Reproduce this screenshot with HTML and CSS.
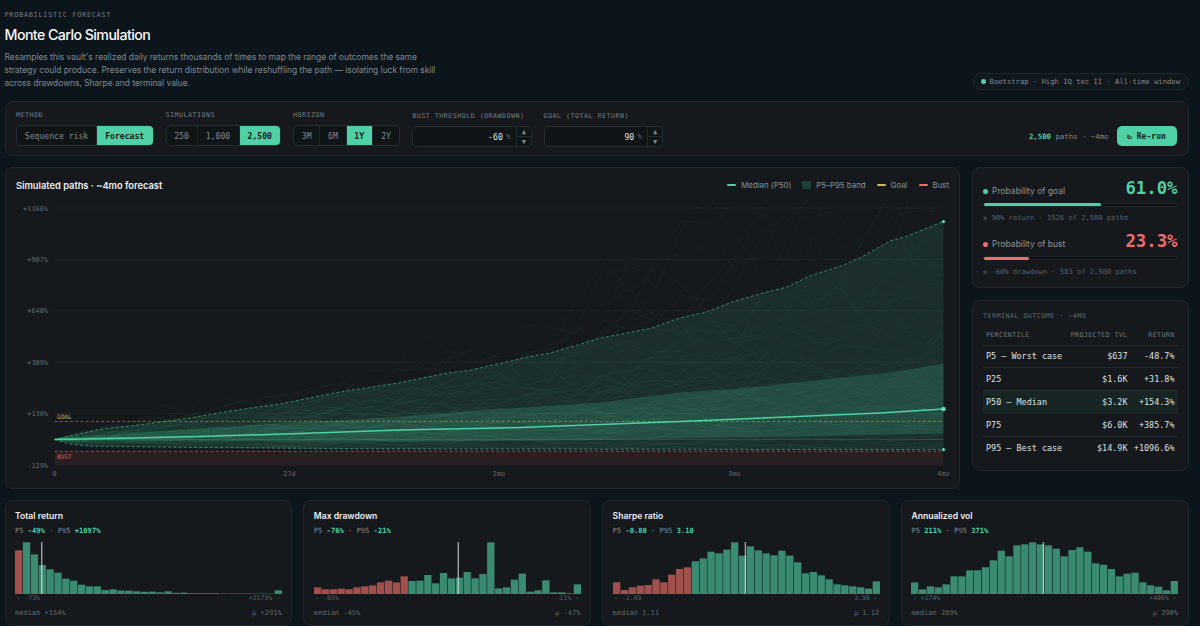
FILE: index.html
```html
<!DOCTYPE html>
<html lang="en">
<head>
<meta charset="utf-8">
<title>Monte Carlo Simulation</title>
<link rel="stylesheet" href="styles.css">
</head>
<body>
<main class="page">
  <header class="head">
    <div>
      <div class="eyebrow">PROBABILISTIC FORECAST</div>
      <h1 class="title">Monte Carlo Simulation</h1>
      <p class="desc">Resamples this vault's realized daily returns thousands of times to map the range of outcomes the same<br>strategy could produce. Preserves the return distribution while reshuffling the path — isolating luck from skill<br>across drawdowns, Sharpe and terminal value.</p>
    </div>
    <div class="pill"><i class="dot"></i>Bootstrap · High IQ tec II · All-time window</div>
  </header>

  <section class="card controls">
    <div class="field"><span class="label">METHOD</span>
      <div class="seg seg-method"><span>Sequence risk</span><span class="on">Forecast</span></div></div>
    <div class="field"><span class="label">SIMULATIONS</span>
      <div class="seg seg-sims"><span>250</span><span>1,000</span><span class="on">2,500</span></div></div>
    <div class="field"><span class="label">HORIZON</span>
      <div class="seg seg-hor"><span>3M</span><span>6M</span><span class="on">1Y</span><span>2Y</span></div></div>
    <div class="field low"><span class="label">BUST THRESHOLD (DRAWDOWN)</span>
      <div class="num"><span class="val">-60</span><span class="unit">%</span><div class="spin"><b>▲</b><b>▼</b></div></div></div>
    <div class="field low"><span class="label">GOAL (TOTAL RETURN)</span>
      <div class="num"><span class="val">90</span><span class="unit">%</span><div class="spin"><b>▲</b><b>▼</b></div></div></div>
    <div class="run"><span class="info"><b>2,500</b> paths · ~4mo</span><button class="btn"><span class="re">↻</span> Re-run</button></div>
  </section>

  <div class="mid">
    <section class="card chart">
      <div class="chart-head">
        <h2>Simulated paths · ~4mo forecast</h2>
        <div class="legend">
          <span><i class="line green"></i>Median (P50)</span>
          <span><i class="box"></i>P5–P95 band</span>
          <span><i class="line gold"></i>Goal</span>
          <span><i class="line red"></i>Bust</span>
        </div>
      </div>
      <svg id="plot" width="934" height="286" viewBox="16 196 934 286"></svg>
    </section>
    <div class="side">
      <section class="card probs">
        <div class="prob goal">
          <div class="prob-row"><span><i class="dot"></i>Probability of goal</span><strong>61.0%</strong></div>
          <div class="track"><div class="fill" style="width:61%"></div></div>
          <div class="note">≥ 90% return · 1526 of 2,500 paths</div>
        </div>
        <div class="prob bust">
          <div class="prob-row"><span><i class="dot"></i>Probability of bust</span><strong>23.3%</strong></div>
          <div class="track"><div class="fill" style="width:23.3%"></div></div>
          <div class="note">≤ -60% drawdown · 583 of 2,500 paths</div>
        </div>
      </section>
      <section class="card outcome">
        <div class="outcome-title">TERMINAL OUTCOME · ~4MO</div>
        <div class="row th"><span>PERCENTILE</span><span>PROJECTED TVL</span><span>RETURN</span></div>
        <div class="row"><span>P5 — Worst case</span><span>$637</span><span>-48.7%</span></div>
        <div class="row"><span>P25</span><span>$1.6K</span><span>+31.8%</span></div>
        <div class="row hl"><span>P50 — Median</span><span>$3.2K</span><span>+154.3%</span></div>
        <div class="row"><span>P75</span><span>$6.0K</span><span>+385.7%</span></div>
        <div class="row"><span>P95 — Best case</span><span>$14.9K</span><span>+1096.6%</span></div>
      </section>
    </div>
  </div>

  <div class="hists">
    <section class="card hist"><h3>Total return</h3><p>P5 <b>-49%</b> · P95 <b>+1097%</b></p><svg class="bars" width="267.4" height="52" viewBox="0 0 267.4 52"></svg><div class="ends"><span>‹ -73%</span><span>+2175% ›</span></div><div class="foot"><span>median +154%</span><span>μ +291%</span></div></section>
    <section class="card hist"><h3>Max drawdown</h3><p>P5 <b>-76%</b> · P95 <b>-21%</b></p><svg class="bars" width="267.4" height="52" viewBox="0 0 267.4 52"></svg><div class="ends"><span>‹ -85%</span><span>-11% ›</span></div><div class="foot"><span>median -45%</span><span>μ -47%</span></div></section>
    <section class="card hist"><h3>Sharpe ratio</h3><p>P5 <b>-0.80</b> · P95 <b>3.10</b></p><svg class="bars" width="267.4" height="52" viewBox="0 0 267.4 52"></svg><div class="ends"><span>‹ -1.69</span><span>3.96 ›</span></div><div class="foot"><span>median 1.11</span><span>μ 1.12</span></div></section>
    <section class="card hist"><h3>Annualized vol</h3><p>P5 <b>211%</b> · P95 <b>371%</b></p><svg class="bars" width="267.4" height="52" viewBox="0 0 267.4 52"></svg><div class="ends"><span>‹ +174%</span><span>+406% ›</span></div><div class="foot"><span>median 289%</span><span>μ 290%</span></div></section>
  </div>
</main>
<script src="app.js"></script>
</body>
</html>
```

FILE: styles.css
```css
:root {
  --mono: "DejaVu Sans Mono", "Liberation Mono", monospace;
  --sans: Inter, "Liberation Sans", sans-serif;
  --green: #50d0a6;
  --red: #f06d6b;
  --gold: #d2b75c;
  --line: #20272c;
  --muted: #828b92;
  --dim: #596168;
}
* { box-sizing: border-box; }
html, body { height: 100%; }
body { margin: 0; background: #0d151c; font-family: var(--sans); color: #e8ecee; overflow: hidden; }
.page { padding: 11px 11.5px 0 4.5px; height: 626px; }
.card { background: #15191d; border: 1px solid var(--line); border-radius: 8px; }
h1, h2, h3, p { margin: 0; }

.head { display: flex; justify-content: space-between; align-items: flex-end; height: 79px; }
.eyebrow { font: 6.9px/9px var(--mono); letter-spacing: .7px; color: #727c84; }
.title { font-size: 14.2px; line-height: 18px; font-weight: 500; letter-spacing: -.56px; color: #f7f9fa; margin-top: 6px; }
.desc { font-size: 8.5px; line-height: 13px; color: #7f8990; margin-top: 7px; white-space: nowrap; letter-spacing: -.05px; }
.pill { display: flex; align-items: center; height: 17px; border: 1px solid var(--line); border-radius: 9px; padding: 0 7.5px 0 7px; font: 7.2px var(--mono); color: var(--muted); background: #11181d; white-space: nowrap; }
.dot { display: inline-block; width: 5px; height: 5px; border-radius: 50%; background: var(--green); margin-right: 4px; }

.controls { margin-top: 11px; height: 55px; padding: 9px 11px 0 10.5px; display: flex; gap: 12px; }
.label { display: block; font: 6.7px/9px var(--mono); letter-spacing: .47px; color: #757f86; white-space: nowrap; margin-bottom: 5px; }
.low { padding-top: 1px; }
.seg { display: flex; height: 21px; border: 1px solid #252c31; border-radius: 5px; overflow: hidden; background: #0f1417; font: 8.1px var(--mono); color: var(--muted); }
.seg span { display: flex; align-items: center; justify-content: center; border-right: 1px solid #20272b; }
.seg span:last-child { border-right: 0; }
.seg .on { background: var(--green); color: #0b1f1a; font-weight: 700; }
.seg-method span:first-child { width: 80px; } .seg-method span:last-child { width: 55.5px; }
.seg-sims span:nth-child(1) { width: 31px; } .seg-sims span:nth-child(2) { width: 42px; } .seg-sims span:nth-child(3) { width: 40.5px; }
.seg-hor span:nth-child(n) { width: 26.3px; }
.num { display: flex; align-items: center; width: 119.4px; height: 21px; border: 1px solid #252c31; border-radius: 5px; background: #0f1417; font: 8.2px var(--mono); overflow: hidden; }
.val { margin-left: auto; color: #e0e5e7; }
.unit { color: #566067; font-size: 7.8px; margin: 0 5.5px 0 3px; }
.spin { width: 14.5px; height: 100%; border-left: 1px solid #22292d; display: flex; flex-direction: column; }
.spin b { flex: 1; display: flex; align-items: center; justify-content: center; font: 7px/8px var(--mono); color: #7d868c; }
.spin b + b { border-top: 1px solid #22292d; }
.run { margin-left: auto; display: flex; align-items: center; gap: 8px; height: 20px; margin-top: 15px; }
.info { font: 7.35px var(--mono); color: var(--muted); white-space: nowrap; }
.info b { color: var(--green); }
.btn { width: 60px; height: 20px; border: 0; border-radius: 5px; padding: 0; background: var(--green); color: #0b1f1a; font: 700 8.1px var(--mono); }
.re { font-size: 8.1px; }

.mid { display: flex; justify-content: space-between; margin-top: 11px; height: 322px; }
.chart { width: 955.5px; height: 322px; padding: 10px 10px 0 10.5px; overflow: hidden; }
.chart-head { display: flex; justify-content: space-between; align-items: center; height: 14px; }
.chart-head h2 { font-size: 9.3px; font-weight: 600; color: #edf0f2; }
.legend { display: flex; gap: 11px; font-size: 7.85px; color: #8a9399; }
.legend span { display: flex; align-items: center; }
.legend i { margin-right: 5px; }
.line { width: 9px; height: 2px; border-radius: 1px; }
.green { background: var(--green); } .gold { background: var(--gold); } .red { background: var(--red); }
.box { width: 9px; height: 8px; border-radius: 1.5px; background: #1f3f39; }
.chart svg { display: block; margin-top: 4px; }
svg text { font-family: var(--mono); }

.side { width: 216.5px; display: flex; flex-direction: column; gap: 11.5px; }
.probs { height: 121px; padding: 8.5px 10px 0; }
.prob { height: 53.5px; }
.prob-row { display: flex; justify-content: space-between; align-items: center; height: 22px; }
.prob-row span { font-size: 8.5px; color: #8b949a; padding-top: 6px; white-space: nowrap; }
.prob-row strong { font: 700 17.3px/22px var(--mono); color: var(--green); }
.track { height: 4px; margin-top: 4px; border: 1px solid #20272b; border-radius: 2px; background: #0d1114; }
.fill { height: 3px; margin-top: -.5px; border-radius: 2px; background: var(--green); }
.note { font: 7.1px/9px var(--mono); color: var(--dim); margin-top: 6.5px; white-space: nowrap; }
.bust .dot, .bust .fill { background: var(--red); }
.bust strong { color: var(--red); }
.outcome { height: 171px; padding: 10px 10px 0; }
.outcome-title { font: 6.7px/10px var(--mono); letter-spacing: .46px; color: #626b72; }
.row { display: grid; grid-template-columns: 80px 1fr 47px; height: 22.8px; align-items: center; padding: 0 3px; border-bottom: 1px solid #22292e; font: 8.45px var(--mono); color: #dde2e4; white-space: nowrap; }
.row span:nth-child(n+2) { text-align: right; }
.row:last-child { border-bottom: 0; }
.th { height: 25px; padding-top: 5px; font-size: 6.6px; letter-spacing: .4px; color: #70797f; }
.hl { background: #172524; }

.hists { display: grid; grid-template-columns: repeat(4, minmax(0, 1fr)); gap: 11.2px; margin-top: 11px; }
.hist { height: 125.5px; padding: 9px 9.5px 0; }
.hist h3 { font-size: 8.6px; line-height: 12px; font-weight: 600; color: #edf0f2; }
.hist p { font: 7.1px/11px var(--mono); color: #7c858b; margin-top: 3px; }
.hist p b { color: var(--green); }
.bars { display: block; margin-top: 6px; }
.ends, .foot { display: flex; justify-content: space-between; font: 6.5px/8px var(--mono); color: var(--dim); }
.ends { padding: 0 1.5px; }
.foot { margin-top: 7px; font-size: 7px; color: #626a71; }
```

FILE: app.js
```js
const NS = 'http://www.w3.org/2000/svg';
const add = (parent, tag, attrs, text) => {
  const el = document.createElementNS(NS, tag);
  for (const k in attrs) el.setAttribute(k, attrs[k]);
  if (text) el.textContent = text;
  parent.appendChild(el);
  return el;
};

const GREEN = '#50d0a6';
const plot = document.getElementById('plot');
const X0 = 54.5, X1 = 943.5;
const y = v => 465 - (v + 129) * 257 / 1295;

// Grid and vertical axis
[1166, 907, 648, 389, 130, -129].forEach(v => {
  add(plot, 'line', { x1: X0, x2: X1, y1: y(v), y2: y(v), stroke: '#1d2327', 'stroke-width': 1 });
  add(plot, 'text', { x: 48, y: y(v) + 2.5, 'text-anchor': 'end', 'font-size': 6.9, fill: '#626b72' }, (v > 0 ? '+' : '') + v + '%');
});
add(plot, 'rect', { x: X0, y: y(-60), width: X1 - X0, height: 465 - y(-60), fill: '#291f23' });

const p95 = [[54.5,439.5],[70,436],[83,433],[105,428.5],[130,426],[158,422.5],[190,418],[230,411],[280,404],[340,392],[400,382.7],[425,377.5],[445,373.5],[471,370],[500,363.5],[525,357.5],[550,353],[578,345],[600,338],[622,334],[650,328.5],[675,319.5],[690,315.5],[705,312.5],[735,301],[765,292.5],[787,287],[812,275],[840,266.5],[862,257],[890,241],[905,237],[943.5,221.5]];
const p75 = [[54.5,439.5],[150,431.5],[270,424],[400,416.7],[480,410.5],[600,402.5],[680,392.5],[740,388.5],[820,380],[890,372.5],[943.5,363.5]];
const p50 = [[54.5,439.5],[110,438.5],[200,436.5],[300,433.5],[400,430],[520,427.5],[600,424.5],[680,421.5],[740,419],[880,413],[943.5,409]];
const p25 = [[54.5,439.5],[150,441],[400,441.7],[600,440],[700,438],[820,436],[943.5,433.3]];
const p5 = [[54.5,439.5],[70,444],[90,446],[200,447.5],[400,449],[943.5,449.6]];
const line = pts => 'M' + pts.map(p => p.join(',')).join('L');
const area = (a, b) => line(a) + 'L' + [...b].reverse().map(p => p.join(',')).join('L') + 'Z';
add(plot, 'path', { d: area(p95, p5), fill: GREEN, 'fill-opacity': .115 });
add(plot, 'path', { d: area(p75, p25), fill: GREEN, 'fill-opacity': .18 });

// Individual simulated paths, from a seeded generator
const clip = add(add(plot, 'defs', {}), 'clipPath', { id: 'area' });
add(clip, 'rect', { x: X0, y: 200, width: X1 - X0, height: 251 });
const sims = add(plot, 'g', { 'clip-path': 'url(#area)', fill: 'none', stroke: GREEN, 'stroke-opacity': .042, 'stroke-width': .8 });
let seed = 90210;
const rnd = () => { seed = (seed * 1664525 + 1013904223) % 4294967296; return (seed + .5) / 4294967296; };
const gauss = () => Math.sqrt(-2 * Math.log(rnd())) * Math.cos(2 * Math.PI * rnd());
const STEPS = 34;
for (let i = 0; i < 120; i++) {
  let log = 0;
  const pts = [[X0, y(0)]];
  for (let s = 1; s <= STEPS; s++) {
    log += .0274 + .16 * gauss();
    pts.push([(X0 + (X1 - X0) * s / STEPS).toFixed(1), y((Math.exp(log) - 1) * 100).toFixed(1)]);
  }
  add(sims, 'path', { d: line(pts) });
}

add(plot, 'line', { x1: X0, x2: X1, y1: y(0), y2: y(0), stroke: '#7a8a88', 'stroke-opacity': .35, 'stroke-width': .8 });
const dash = { fill: 'none', 'stroke-dasharray': '3 2.2', 'stroke-width': .8 };
add(plot, 'path', { ...dash, d: line(p95), stroke: GREEN, 'stroke-opacity': .7 });
add(plot, 'path', { ...dash, d: line(p5), stroke: GREEN, 'stroke-opacity': .7 });
add(plot, 'path', { ...dash, d: `M${X0},${y(90)}H${X1}`, stroke: '#d2b75c', 'stroke-opacity': .6 });
add(plot, 'path', { ...dash, d: `M${X0},${y(-60)}H${X1}`, stroke: '#e88078', 'stroke-opacity': .65 });
add(plot, 'path', { d: line(p50), fill: 'none', stroke: GREEN, 'stroke-width': 1.5 });
[[221.6, 1.6], [409, 2.2], [449.6, 1.6]].forEach(([cy, r]) => add(plot, 'circle', { cx: X1, cy, r, fill: '#62dcb4' }));
add(plot, 'text', { x: 57, y: 418.8, 'font-size': 6.1, fill: '#c3ab5b' }, 'GOAL');
add(plot, 'text', { x: 57, y: 458.9, 'font-size': 6.1, fill: '#d0605f' }, 'BUST');
[[54.5, '0'], [289.5, '27d'], [499, '2mo'], [734.5, '3mo'], [943.5, '4mo']].forEach(([x, t]) =>
  add(plot, 'text', { x, y: 476.3, 'text-anchor': 'middle', 'font-size': 6.8, fill: '#626b72' }, t));

// Histograms: bar heights in thirds of a pixel, number of losing bins, median position
const hists = [
  { bad: 1, med: 26.7, h: [131,155,119,87,74,64,46,40,28,23,23,12,14,10.5,10,8,6.5,7,5,8,3.5,4,2,2,2,2,1,1,1,1,.7,.7,.7,11] },
  { bad: 12, med: 144.3, h: [20,14,14,16,14,20,23,26,35,40,35,53,39,40,57,32,63,47,49,66,47,60,155,17,20,43,61,7,11,41,5,5,2,29] },
  { bad: 10, med: 132.4, h: [35,12,20,25,27,44,35,58,75,80,98,107,127,122,133,155,115,143,131,122,116,130,115,95,62,66,56,44,29,26,23,20,16,38] },
  { bad: 0, med: 132.4, h: [35,14,23,20,29,53,53,71,71,80,101,130,113,146,149,155,149,146,136,113,132,140,127,92,88,75,53,61,64,35,26,22,11,39] }
];
document.querySelectorAll('.bars').forEach((svg, i) => {
  const { bad, med, h } = hists[i];
  h.forEach((v, n) => add(svg, 'rect', { x: n * 7.87, y: 52 - v / 3, width: 7.3, height: v / 3, fill: n < bad ? '#a1504e' : '#3a8b71' }));
  add(svg, 'rect', { x: 0, y: 51.5, width: 267.4, height: .5, fill: '#3a8b71', 'fill-opacity': .4 });
  add(svg, 'rect', { x: med - .7, y: 0, width: 1.4, height: 52, fill: '#e6f0ed', 'fill-opacity': .65 });
});
```
